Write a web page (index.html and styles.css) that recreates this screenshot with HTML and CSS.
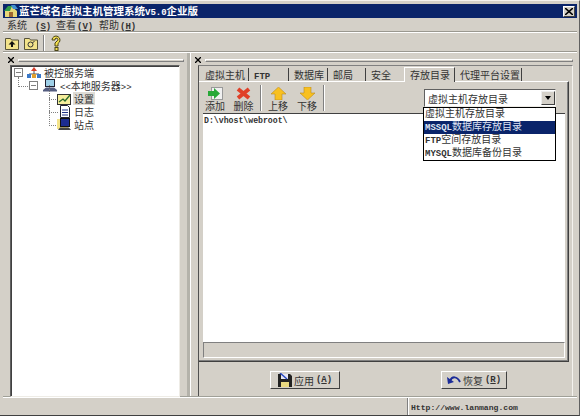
FILE: index.html
```html
<!DOCTYPE html>
<html lang="zh-CN">
<head>
    <meta charset="UTF-8">
    <title>蓝芒域名虚拟主机管理系统</title>
    <link rel="stylesheet" href="styles.css">
</head>
<body>
    <div class="window">
        <div class="titlebar">
            <svg class="title-icon" width="14" height="14" viewBox="0 0 14 14">
                <path d="M1 7 7 2l6 5v6H1z" fill="#e8d878"/>
                <path d="M0 7 4 2h4L6 7z" fill="#2f9a4a"/>
                <path d="M7 1h4l3 4H9z" fill="#3f8fd0"/>
                <rect x="5" y="8" width="4" height="5" fill="#a06830"/>
            </svg>
            <span class="title-text">蓝芒域名虚拟主机管理系统<span class="lat">V5.0</span>企业版</span>
            <button class="close-btn">
                <svg width="8" height="7" viewBox="0 0 8 7"><path d="M0 0 8 7M8 0 0 7" stroke="#000" stroke-width="1.6"/></svg>
            </button>
        </div>

        <div class="menubar">
            <span class="menu-item m1">系统<span class="lat key">(<u>S</u>)</span></span>
            <span class="menu-item m2">查看<span class="lat key">(<u>V</u>)</span></span>
            <span class="menu-item m3">帮助<span class="lat key">(<u>H</u>)</span></span>
        </div>

        <div class="toolbar">
            <svg class="tool-icon" width="14" height="14" viewBox="0 0 14 14">
                <path d="M.5 2.500h5l1 1.500h7v9.500H.5z" fill="#f3e38a" stroke="#57533a"/>
                <path d="M7 5 3.500 8.500H6V11h2V8.500h2.500z" fill="#111"/>
            </svg>
            <svg class="tool-icon" width="14" height="14" viewBox="0 0 14 14">
                <path d="M.5 2.500h5l1 1.500h7v9.500H.5z" fill="#f3e38a" stroke="#57533a"/>
                <circle cx="6.500" cy="8.500" r="2.500" fill="none" stroke="#333"/>
                <path d="M8.500 6.500l2-1" stroke="#333"/>
            </svg>
            <span class="tool-sep"></span>
            <svg class="tool-icon help" width="12" height="16" viewBox="0 0 12 16">
                <path d="M2 5a4 4 0 1 1 6 3.500V11H5V8l2-2a1.500 1.500 0 1 0-2-1z" fill="#f5e050" stroke="#4c4616"/>
                <rect x="5" y="12.500" width="3" height="3" fill="#f5e050" stroke="#4c4616"/>
            </svg>
        </div>

        <div class="main">
            <div class="left-pane">
                <div class="pane-head">
                    <svg width="6" height="6" viewBox="0 0 6 6"><path d="M0 0 6 6M6 0 0 6" stroke="#000" stroke-width="1.300"/></svg>
                    <span class="grip"></span>
                </div>
                <div class="tree">
                    <div class="tree-row level0">
                        <span class="expander"></span>
                        <svg class="tree-icon" width="14" height="12" viewBox="0 0 14 12">
                            <path d="M7 0 10 4H4z" fill="#d8402c"/>
                            <path d="M7 4v3M2 7h10" stroke="#555"/>
                            <rect x="0" y="7" width="4" height="4" fill="#3a78c8"/>
                            <rect x="5" y="7" width="4" height="4" fill="#e0a030"/>
                            <rect x="10" y="7" width="4" height="4" fill="#3a78c8"/>
                        </svg>
                        <span class="tree-label">被控服务端</span>
                    </div>
                    <div class="tree-row level1">
                        <span class="expander"></span>
                        <svg class="tree-icon" width="14" height="13" viewBox="0 0 14 13">
                            <rect x="2.500" y=".5" width="9" height="7" fill="#9fd0e8" stroke="#223"/>
                            <path d="M0 11 3 8.500h8l3 2.500v1.500H0z" fill="#555d80"/>
                        </svg>
                        <span class="tree-label"><span class="lat thin">&lt;&lt;</span>本地服务器<span class="lat thin">&gt;&gt;</span></span>
                    </div>
                    <div class="tree-row level2 selected">
                        <svg class="tree-icon" width="14" height="12" viewBox="0 0 14 12">
                            <rect x=".5" y="1.500" width="13" height="10" fill="#f6ee9c" stroke="#333"/>
                            <path d="M2 9l4-3 2 2 5-6" fill="none" stroke="#2a6a2a" stroke-width="1.300"/>
                        </svg>
                        <span class="tree-label">设置</span>
                    </div>
                    <div class="tree-row level2">
                        <svg class="tree-icon" width="14" height="13" viewBox="0 0 14 13">
                            <path d="M3.500.5h7l2 2v10h-9z" fill="#fff" stroke="#223"/>
                            <path d="M5 5h6M5 7.500h6M5 10h6" stroke="#223388"/>
                        </svg>
                        <span class="tree-label">日志</span>
                    </div>
                    <div class="tree-row level2">
                        <svg class="tree-icon" width="14" height="13" viewBox="0 0 14 13">
                            <rect x="0" y="1" width="11" height="10" fill="#f3e38a"/>
                            <rect x="3.500" y=".5" width="9" height="8" fill="#1c2c90" stroke="#111"/>
                            <path d="M1 12 3 9.500h9l2 2.500z" fill="#444"/>
                        </svg>
                        <span class="tree-label">站点</span>
                    </div>
                </div>
            </div>

            <div class="right-pane">
                <div class="pane-head">
                    <svg width="6" height="6" viewBox="0 0 6 6"><path d="M0 0 6 6M6 0 0 6" stroke="#000" stroke-width="1.300"/></svg>
                    <span class="grip"></span>
                </div>
                <div class="content">
                    <div class="tabs">
                        <span class="tab t-host">虚拟主机</span>
                        <span class="tab t-ftp"><span class="lat">FTP</span></span>
                        <span class="tab t-db">数据库</span>
                        <span class="tab t-mail">邮局</span>
                        <span class="tab t-safe">安全</span>
                        <span class="tab t-dir active">存放目录</span>
                        <span class="tab t-agent">代理平台设置</span>
                    </div>

                    <div class="tab-body">
                        <div class="list-toolbar">
                            <div class="big-btn b-add">
                                <svg width="15" height="13" viewBox="0 0 15 13">
                                    <rect x="3.500" y=".5" width="11" height="12" fill="#f0f0f0" stroke="#999"/>
                                    <path d="M0 4h6V1l6 5.500L6 12V9H0z" fill="#28a838"/>
                                </svg>
                                <span>添加</span>
                            </div>
                            <div class="big-btn b-del">
                                <svg width="15" height="13" viewBox="0 0 15 13">
                                    <path d="M2 2 13 11M13 2 2 11" stroke="#e04028" stroke-width="4"/>
                                </svg>
                                <span>删除</span>
                            </div>
                            <span class="list-sep"></span>
                            <div class="big-btn b-up">
                                <svg width="15" height="13" viewBox="0 0 15 13">
                                    <path d="M7.500 0 15 7h-4v6H4V7H0z" fill="#f8c020" stroke="#b88a20" stroke-width=".6"/>
                                </svg>
                                <span>上移</span>
                            </div>
                            <div class="big-btn b-down">
                                <svg width="15" height="13" viewBox="0 0 15 13">
                                    <path d="M7.500 13 15 6h-4V0H4v6H0z" fill="#f8c020" stroke="#b88a20" stroke-width=".6"/>
                                </svg>
                                <span>下移</span>
                            </div>
                            <span class="list-sep last"></span>
                        </div>
                        <div class="dir-list"><span class="lat path">D:\vhost\webroot\</span></div>
                        <div class="list-foot"></div>

                        <div class="combo">
                            <span class="combo-text">虚拟主机存放目录</span>
                            <span class="combo-arrow"></span>
                        </div>
                        <ul class="dropdown">
                            <li>虚拟主机存放目录</li>
                            <li class="picked"><span class="lat">MSSQL</span>数据库存放目录</li>
                            <li><span class="lat">FTP</span>空间存放目录</li>
                            <li><span class="lat">MYSQL</span>数据库备份目录</li>
                        </ul>
                    </div>

                    <div class="actions">
                        <button class="act-btn apply">
                            <svg width="14" height="14" viewBox="0 0 14 14">
                                <path d="M0 1h12l2 2v11H0z" fill="#222"/>
                                <rect x="3" y="1" width="7" height="5" fill="#e8e8f4"/>
                                <rect x="3" y="9" width="8" height="5" fill="#e8d880"/>
                                <path d="M2 0 9 6" stroke="#2a4ac0" stroke-width="1.500"/>
                            </svg>
                            应用<span class="lat">(<u>A</u>)</span>
                        </button>
                        <button class="act-btn restore">
                            <svg width="14" height="10" viewBox="0 0 14 10">
                                <path d="M3 6C5 1 10 1 13 7" fill="none" stroke="#1c2c98" stroke-width="2"/>
                                <path d="M0 2l1 7 6-2z" fill="#1c2c98"/>
                            </svg>
                            恢复<span class="lat">(<u>R</u>)</span>
                        </button>
                    </div>
                </div>
            </div>
        </div>

        <div class="statusbar">
            <span class="status-left"></span>
            <span class="status-url"><span class="lat url">Http://www.lanmang.com</span></span>
        </div>
    </div>
</body>
</html>
```

FILE: styles.css
```css
* {
    margin: 0;
    padding: 0;
    box-sizing: border-box;
}

body {
    width: 580px;
    height: 416px;
    overflow: hidden;
    background: #d4d0c8;
    font-family: "Noto Sans CJK SC", "Liberation Mono", monospace;
    font-size: 10px;
    color: #333;
}

.lat {
    font-family: "Liberation Mono", monospace;
    font-size: 9px;
    font-weight: bold;
    line-height: 1;
}

.lat.thin {
    font-weight: normal;
}

.window {
    width: 580px;
    height: 416px;
    display: flex;
    flex-direction: column;
    padding: 3px 2px 0 3px;
    border-top: 1px solid #f4f2ee;
    border-bottom: 1px solid #404040;
    border-right: 1px solid #606060;
}

.titlebar {
    height: 14px;
    flex: none;
    display: flex;
    align-items: center;
    background: #0a246a;
    color: #fff;
    font-size: 10.500px;
    font-weight: bold;
    line-height: 14px;
    white-space: nowrap;
}

.title-icon {
    margin: 0 1px;
}

.close-btn {
    margin-left: auto;
    margin-right: 2px;
    width: 12px;
    height: 11px;
    display: flex;
    align-items: center;
    justify-content: center;
    background: #d4d0c8;
    border: 1px solid;
    border-color: #fff #404040 #404040 #fff;
}

.menubar {
    height: 15px;
    flex: none;
    display: flex;
    align-items: center;
    border-bottom: 1px solid #fff;
    box-shadow: inset 0 -1px 0 #9a9890;
}

.menu-item {
    line-height: 14px;
    white-space: nowrap;
}

.m1 { margin-left: 4px; width: 49px; }
.m2 { width: 43px; }
.m3 { width: 44px; }

.key { margin-left: 1px; }
.m1 .key { margin-left: 8px; }

.toolbar {
    height: 20px;
    flex: none;
    display: flex;
    align-items: center;
    gap: 5px;
    padding-left: 2px;
    border-bottom: 1px solid #fff;
    box-shadow: inset 0 -1px 0 #9a9890;
}

.tool-sep {
    width: 2px;
    height: 16px;
    border-left: 1px solid #808080;
    border-right: 1px solid #fff;
}

.main {
    flex: 1;
    min-height: 0;
    display: flex;
}

.left-pane {
    width: 187px;
    flex: none;
    display: flex;
    flex-direction: column;
    padding: 3px 7px 0;
    border-right: 3px solid #b4b2aa;
}

.pane-head {
    height: 8px;
    flex: none;
    display: flex;
    align-items: center;
    gap: 4px;
}

.left-pane .pane-head {
    margin: 0 -4px 0 -2px;
}

.grip {
    flex: 1;
    height: 3px;
    border: 1px solid;
    border-color: #fff #808080 #808080 #fff;
}

.tree {
    position: relative;
    flex: 1;
    margin-top: 1px;
    background: #fff;
    border: 1px solid;
    border-color: #606060 #eeece6 #eeece6 #606060;
    box-shadow: inset 1px 1px 0 #404040;
}

.tree-row {
    position: relative;
    height: 13px;
    display: flex;
    align-items: center;
    line-height: 13px;
    white-space: nowrap;
}

.level0 { padding-left: 3px; }
.level1 { padding-left: 18px; }
.level2 { padding-left: 46px; }

.level1::before {
    content: '';
    position: absolute;
    left: 7px;
    top: -2px;
    width: 11px;
    height: 9px;
    border-left: 1px dotted #808080;
    border-bottom: 1px dotted #808080;
}

.level2::before {
    content: '';
    position: absolute;
    left: 38px;
    top: -7px;
    width: 8px;
    height: 14px;
    border-left: 1px dotted #808080;
    border-bottom: 1px dotted #808080;
}

.expander {
    width: 9px;
    height: 9px;
    margin-right: 4px;
    background: linear-gradient(#808080, #808080) center / 5px 1px no-repeat, #fff;
    border: 1px solid #808080;
}

.level1 .expander {
    margin-right: 5px;
}

.tree-icon {
    margin-right: 2px;
    flex: none;
    position: relative;
}

.tree-label {
    padding: 0 1px;
}

.selected .tree-label {
    background: #dedcd6;
}

.right-pane {
    flex: 1;
    min-width: 0;
    display: flex;
    flex-direction: column;
    padding: 3px 4px 0 4px;
    border-left: 1px solid #fff;
}

.content {
    flex: 1;
    min-height: 0;
    display: flex;
    flex-direction: column;
    margin-top: 1px;
    margin-left: 3px;
    border-top: 1px solid #808080;
    border-left: 1px solid #505050;
    border-right: 1px solid #f4f2ee;
    border-bottom: 1px solid #f4f2ee;
}

.tabs {
    height: 15px;
    flex: none;
    display: flex;
    align-items: flex-end;
    padding-left: 1px;
}

.tab {
    height: 13px;
    padding-left: 5px;
    line-height: 13px;
    border-right: 1px solid #404040;
    white-space: nowrap;
}

.t-host { width: 49px; }
.t-ftp { width: 40px; }
.t-db { width: 39px; }
.t-mail { width: 38px; }
.t-safe { width: 38px; border-right: 0; }
.t-dir { width: 51px; }
.t-agent { width: 67px; }

.tab.active {
    height: 15px;
    background: #d4d0c8;
    border-top: 1px solid #fff;
    border-left: 1px solid #fff;
    margin-bottom: -1px;
    position: relative;
    z-index: 1;
}

.tab-body {
    position: relative;
    height: 281px;
    flex: none;
    display: flex;
    flex-direction: column;
    margin-right: 3px;
    padding: 2px 3px 3px 4px;
    border-top: 1px solid #fff;
    border-right: 1px solid #404040;
    border-bottom: 1px solid #404040;
    box-shadow: inset -1px -1px 0 #808080;
}

.list-toolbar {
    height: 29px;
    flex: none;
    display: flex;
    align-items: flex-start;
}

.big-btn {
    display: flex;
    flex-direction: column;
    align-items: center;
    padding-top: 3px;
    line-height: 12px;
}

.b-add { width: 24px; }
.b-del { width: 33px; }
.b-up { width: 32px; }
.b-down { width: 26px; }

.list-sep {
    width: 2px;
    height: 26px;
    margin-top: 1px;
    border-left: 1px solid #808080;
    border-right: 1px solid #fff;
}

.list-sep.last {
    margin-left: 3px;
}

.dir-list {
    flex: 1;
    padding: 0 1px;
    background: #fff;
    border-top: 1px solid #404040;
    line-height: 10px;
}

.path {
    font-size: 8.200px;
}

.list-foot {
    height: 16px;
    flex: none;
    border: 1px solid;
    border-color: #808080 #fff #fff #808080;
}

.combo {
    position: absolute;
    left: 225px;
    top: 7px;
    width: 132px;
    height: 18px;
    display: flex;
    align-items: center;
    padding-left: 3px;
    background: #fff;
    border: 1px solid;
    border-color: #606060 #eeece6 #eeece6 #606060;
}

.combo-arrow {
    position: relative;
    margin-left: auto;
    width: 14px;
    height: 14px;
    background: #d4d0c8;
    border: 1px solid;
    border-color: #eee #404040 #404040 #eee;
}

.combo-arrow::after {
    content: '';
    position: absolute;
    left: 3px;
    top: 4px;
    border: 3px solid transparent;
    border-top: 4px solid #000;
    border-bottom: 0;
}

.dropdown {
    position: absolute;
    left: 224px;
    top: 25px;
    width: 133px;
    height: 54px;
    list-style: none;
    background: #fff;
    border: 1px solid #000;
}

.dropdown li {
    height: 13px;
    line-height: 9px;
    padding-left: 1px;
    white-space: nowrap;
}

.dropdown li.picked {
    background: #0a246a;
    color: #dfe4f4;
}

.actions {
    flex: 1;
    display: flex;
    align-items: flex-start;
    padding-top: 9px;
}

.act-btn {
    height: 18px;
    display: flex;
    align-items: center;
    justify-content: center;
    gap: 2px;
    background: #d4d0c8;
    border: 1px solid;
    border-color: #fff #404040 #404040 #fff;
    font: inherit;
    color: #333;
}

.apply { width: 70px; margin-left: 71px; }
.restore { width: 66px; margin-left: 101px; }

.statusbar {
    height: 18px;
    flex: none;
    display: flex;
    border-top: 1px solid #fff;
    box-shadow: 0 -1px 0 #a0a098;
}

.status-left {
    flex: 1;
    border-right: 1px solid #808080;
}

.status-url {
    width: 169px;
    padding-left: 2px;
    line-height: 16px;
    border-left: 1px solid #fff;
}

.url {
    font-size: 8.100px;
}
```
